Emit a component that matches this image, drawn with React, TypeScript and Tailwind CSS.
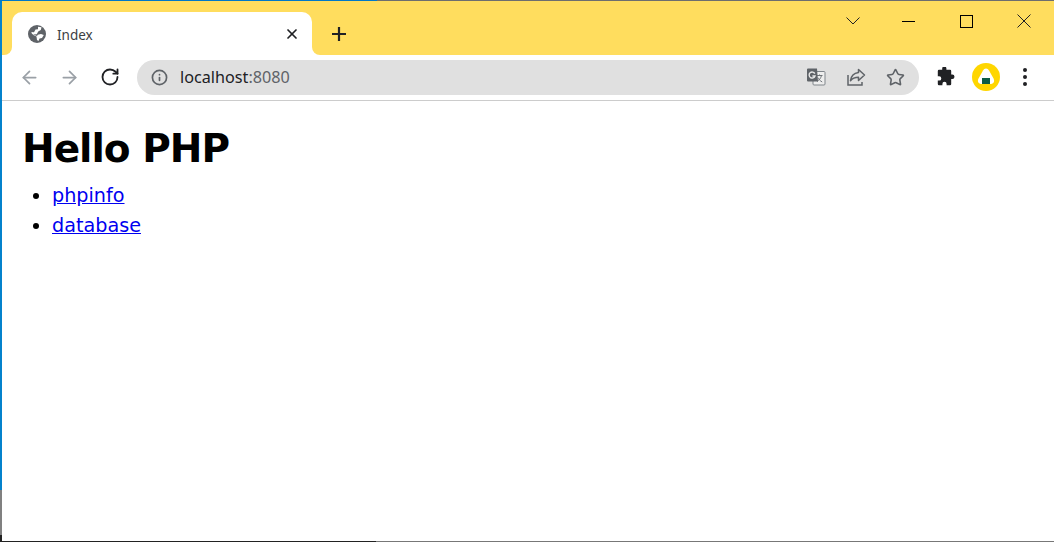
import { ArrowLeft, ArrowRight, Info, RotateCw, Star, X } from "lucide-react";

function Globe() {
  return (
    <svg viewBox="0 0 18 18" className="w-[18px] h-[18px]">
      <circle cx="9" cy="9" r="9" fill="#5f6368" />
      <path d="M10 1.800 L13.500 2.300 L12.800 5 L10.200 6.500 L8.800 9.300 L5.500 9.500 L2.300 7.800 L5 9.500 L9 11 L9.800 9.800 L13 9 L15.800 10 L14 13 L11.500 13.500 L10.500 16 L9 15 L8.500 11.500 L4.800 9.800 L3.200 7 L6 7.200 L7.500 4.500 L10 4.200 Z" fill="#fff" />
    </svg>
  );
}

function TranslateIcon() {
  return (
    <svg viewBox="0 0 20 20" className="w-5 h-5">
      <rect x="7" y="4.500" width="12" height="13.500" rx="1" fill="#eeeeee" stroke="#80868b" />
      <path d="M11 8.500h5.500M13.500 7.500v1M15.500 8.500c-.6 2.600-2.400 4.800-4.500 6M11.800 10.500c.8 1.600 2.200 3.200 4.400 4.500" fill="none" stroke="#6f7478" strokeWidth="1" />
      <path d="M2 1.500h9l1 13H2a1 1 0 0 1-1-1V2.500a1 1 0 0 1 1-1z" fill="#5f6368" />
      <path d="M8.800 6.600A3 3 0 1 0 9 9H6.400" fill="none" stroke="#e8e8e8" strokeWidth="1.400" />
    </svg>
  );
}

function ShareIcon() {
  return (
    <svg viewBox="0 0 20 20" className="w-5 h-5" fill="none" stroke="#5f6368" strokeWidth="1.500">
      <path d="M2 8v10h14v-3" />
      <path d="M12.500 2.500 18.500 8l-6 5.500v-3.200c-3.500 0-6 .8-8 3.400.5-4 3-7.500 8-8.200z" strokeLinejoin="round" />
    </svg>
  );
}

function Puzzle() {
  return (
    <svg viewBox="0 0 20 20" className="w-5 h-5" fill="#202124">
      <path d="M7.200 1.500a2.100 2.100 0 0 1 4.200 0v1.300H15a1.200 1.200 0 0 1 1.200 1.200v3.500h1.100a2.200 2.200 0 0 1 0 4.400h-1.100V17a1.200 1.200 0 0 1-1.200 1.200h-3.400v-1.300a2.100 2.100 0 0 0-4.200 0v1.300H4A1.200 1.200 0 0 1 2.800 17v-3.400h1.300a2.200 2.200 0 0 0 0-4.400H2.800V4A1.200 1.200 0 0 1 4 2.800h3.200z" />
    </svg>
  );
}

function Avatar() {
  return (
    <svg viewBox="0 0 28 28" className="w-7 h-7">
      <circle cx="14" cy="14" r="14" fill="#ffd600" />
      <path d="M14 5.500c1.300 0 2.200.8 3 2l4.500 8c1.300 2.500.5 5-2.500 5.500H9c-3-.5-3.800-3-2.500-5.500l4.500-8c.8-1.200 1.700-2 3-2z" fill="#fff" />
      <rect x="10" y="15" width="8" height="6" fill="#0b5c45" />
    </svg>
  );
}

export default function App() {
  return (
    <div className="w-[1054px] h-[542px] flex flex-col overflow-hidden bg-white" style={{ fontFamily: '"Noto Sans", sans-serif' }}>
      {/* window edge, top */}
      <div className="flex h-px shrink-0">
        <div className="w-[377px] bg-[#0078c8]" />
        <div className="flex-1 bg-[#6e6e6e]" />
      </div>

      <div className="flex flex-1 min-h-0">
        {/* window edge, left */}
        <div className="w-0.5 flex flex-col shrink-0">
          <div className="h-[489px] bg-[#0482cc]" />
          <div className="h-[45px] bg-[#808080]" />
          <div className="flex-1 bg-[#222222]" />
        </div>

        <div className="flex-1 flex flex-col min-w-0">
          {/* Tab strip */}
          <div className="h-[54px] shrink-0 bg-[#ffdd5e] flex items-end pl-2.5 relative">
            <div className="relative w-[300px] h-[43px] bg-white rounded-t-[10px] flex items-center pl-[16px] pr-[12px]">
              <span className="absolute left-[-8px] bottom-0 w-2 h-2 bg-white">
                <span className="block w-2 h-2 bg-[#ffdd5e] rounded-br-[8px]" />
              </span>
              <span className="absolute right-[-8px] bottom-0 w-2 h-2 bg-white">
                <span className="block w-2 h-2 bg-[#ffdd5e] rounded-bl-[8px]" />
              </span>
              <Globe />
              <span className="ml-[11px] pt-[3px] text-[13.500px] text-[#3c4043] flex-1">Index</span>
              <X size={16} strokeWidth={2.600} className="text-[#202124]" />
            </div>
            <div className="ml-[19px] h-[43px] flex items-center">
              <svg viewBox="0 0 16 16" className="w-4 h-4" fill="none" stroke="#202124" strokeWidth="2.200">
                <path d="M8 1v14M1 8h14" />
              </svg>
            </div>
            <div className="ml-auto self-start flex items-center h-[40px] text-black">
              <svg viewBox="0 0 14 8" className="w-3.5 h-2 mr-[42px]" fill="none" stroke="#202124" strokeWidth="1">
                <path d="M.5.5 7 7 13.500.5" />
              </svg>
              <div className="w-[13px] h-px bg-black mr-[45px]" />
              <div className="w-[13px] h-[13px] border border-black mr-[44px]" />
              <svg viewBox="0 0 14 14" className="w-3.5 h-3.5 mr-[23px]" fill="none" stroke="#202124" strokeWidth="1">
                <path d="M.5.5l13 13M13.500.5l-13 13" />
              </svg>
            </div>
          </div>

          {/* Toolbar */}
          <div className="h-[46px] shrink-0 border-b border-[#cccccc] flex items-center pb-[1px]">
            <ArrowLeft size={21} strokeWidth={2} className="ml-[17px] text-[#9aa0a6]" />
            <ArrowRight size={21} strokeWidth={2} className="ml-[19px] text-[#9aa0a6]" />
            <RotateCw size={20} strokeWidth={2.200} className="ml-[20px] text-[#202124]" />
            <div className="ml-[17px] w-[782px] h-[35px] rounded-full bg-[#e0e0e0] flex items-center pl-[14px] pr-[14px]">
              <Info size={17} strokeWidth={2.400} className="text-[#5f6368]" />
              <span className="ml-[12px] text-[16.200px] text-[#202124] flex-1">
                localhost<span className="text-[#5f6368]">:8080</span>
              </span>
              <TranslateIcon />
              <span className="w-5" />
              <ShareIcon />
              <span className="w-5" />
              <Star size={19} strokeWidth={2} className="text-[#5f6368]" />
            </div>
            <div className="ml-[16px]"><Puzzle /></div>
            <div className="ml-[17px]"><Avatar /></div>
            <div className="ml-[23px] flex flex-col gap-[3.500px]">
              <span className="w-[3.500px] h-[3.500px] rounded-full bg-[#202124]" />
              <span className="w-[3.500px] h-[3.500px] rounded-full bg-[#202124]" />
              <span className="w-[3.500px] h-[3.500px] rounded-full bg-[#202124]" />
            </div>
          </div>

          {/* Page */}
          <div className="flex-1 pt-[26px] pl-[20px]" style={{ fontFamily: '"DejaVu Sans", sans-serif' }}>
            <h1 className="text-[39px] leading-[44px] font-bold text-black tracking-[-1px]">Hello PHP</h1>
            <ul className="list-disc pl-[30px] mt-[10px] text-[19.200px] leading-[30px] text-black">
              <li><a href="#" className="text-[#0000f0] underline">phpinfo</a></li>
              <li><a href="#" className="text-[#0000f0] underline">database</a></li>
            </ul>
          </div>
        </div>
      </div>

      {/* window edge, bottom */}
      <div className="flex h-px shrink-0">
        <div className="w-[376px] bg-[#222222]" />
        <div className="flex-1 bg-[#777777]" />
      </div>
    </div>
  );
}
